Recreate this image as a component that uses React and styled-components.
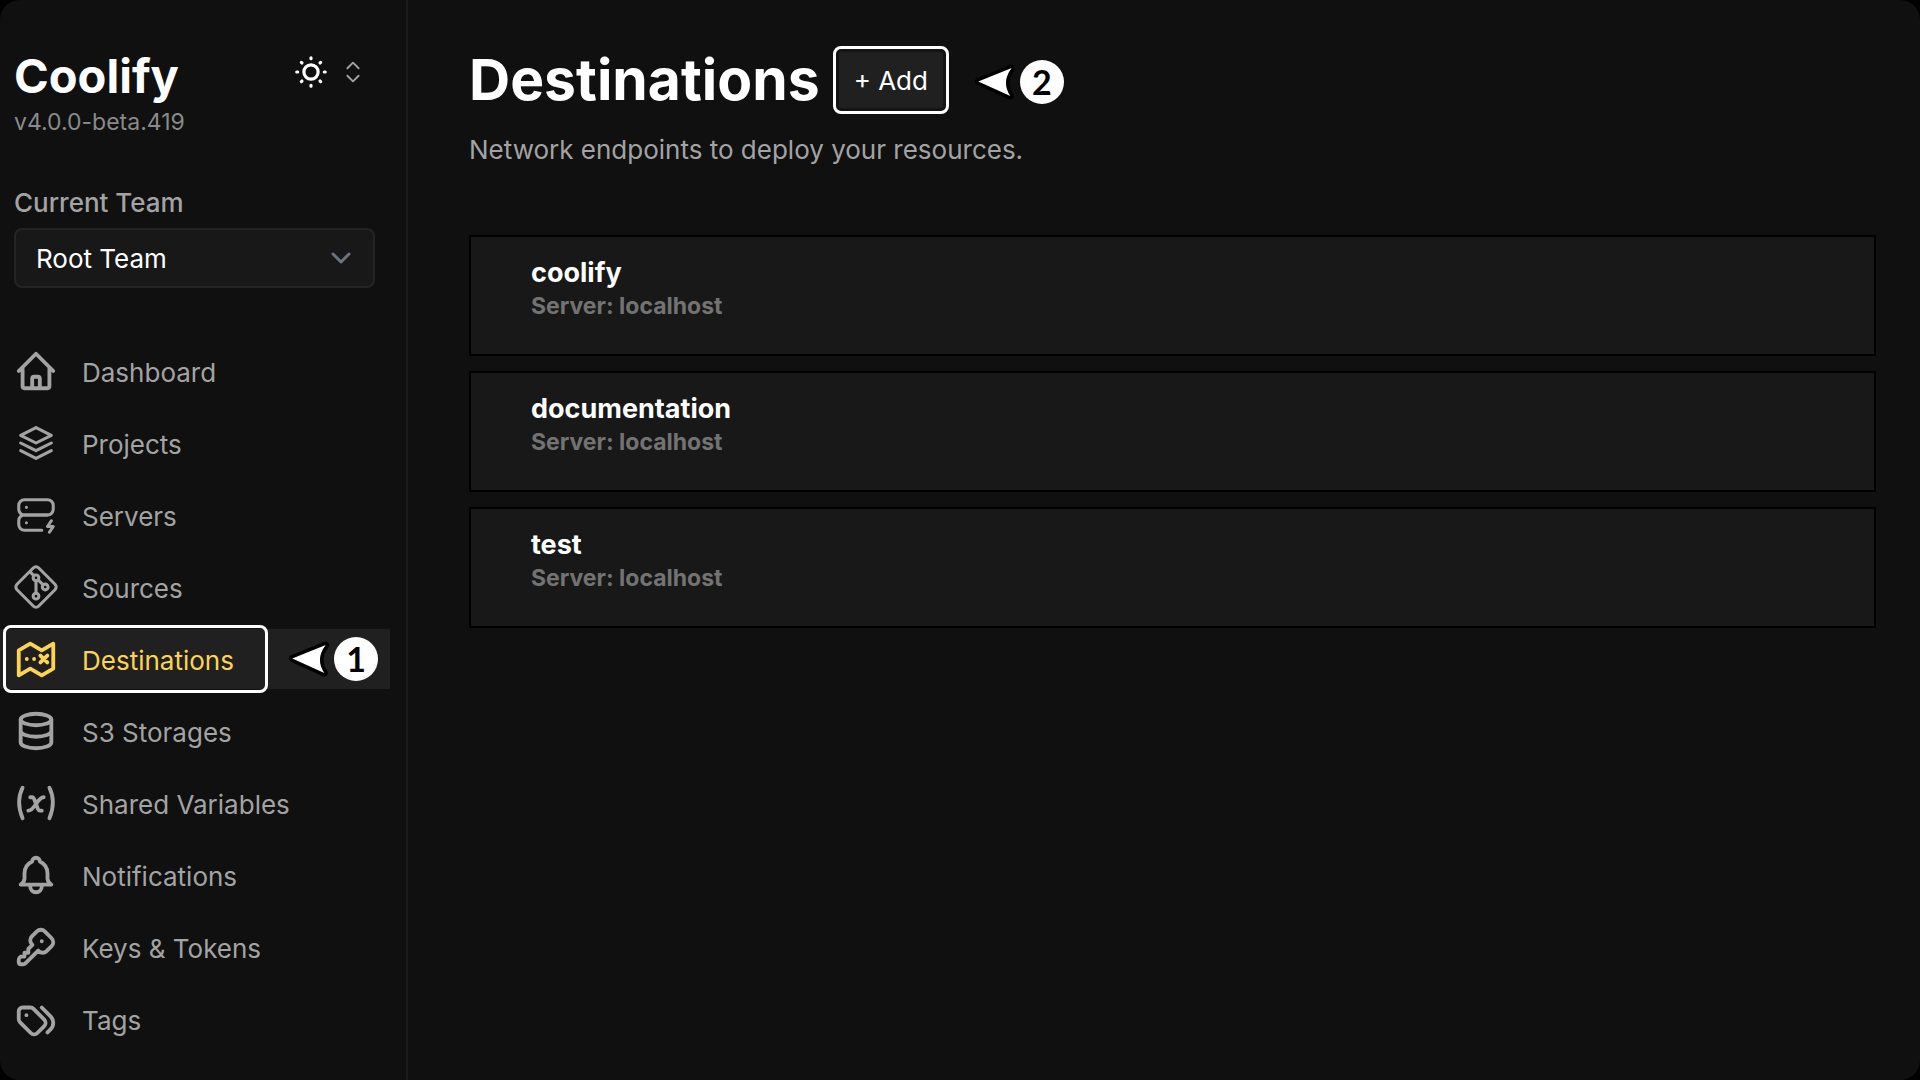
import React from 'react';
import styled, { createGlobalStyle, css } from 'styled-components';

const GlobalStyle = createGlobalStyle`
  *, *::before, *::after { box-sizing: border-box; }
  body {
    margin: 0;
    background: #000;
    color: #a3a3a3;
    font-family: Inter, "Liberation Sans", sans-serif;
    font-size: 26px;
    line-height: 36px;
    -webkit-font-smoothing: antialiased;
  }
  h1, h2, p, ul { margin: 0; padding: 0; }
  ul { list-style: none; }
  a { color: inherit; text-decoration: none; }
  button, select { font: inherit; color: inherit; }
`;

const Shell = styled.div`
  display: grid;
  grid-template-columns: 408px minmax(0, 1fr);
  min-height: 100vh;
  overflow: hidden;
  border-radius: 20px;
  background: #101010;
`;

const Sidebar = styled.aside`
  display: flex;
  flex-direction: column;
  border-right: 2px solid #1b1b1b;
  padding-top: 48px;
`;

const Brand = styled.header`
  display: flex;
  align-items: flex-start;
  justify-content: space-between;
  padding: 0 38px 0 14px;
`;

const Logo = styled.a`
  display: block;
  color: #fff;
  font-size: 47px;
  font-weight: 700;
  line-height: 56px;
`;

const Version = styled.a`
  display: block;
  font-size: 23px;
  line-height: 36px;
  color: #8a8a8a;
`;

const BrandTools = styled.div`
  display: flex;
  align-items: center;
  gap: 8px;
  height: 48px;
`;

const IconButton = styled.button`
  display: flex;
  padding: 0;
  border: 0;
  background: none;
  color: ${({ $muted }) => ($muted ? '#a3a3a3' : '#fff')};
`;

const TeamField = styled.div`
  display: grid;
  gap: 7px;
  padding: 45px 31px 0 14px;
`;

const TeamLabel = styled.label`
  font-weight: 500;
`;

const SelectFrame = styled.div`
  display: grid;
  align-items: center;
  > * { grid-area: 1 / 1; }
  > svg { justify-self: end; margin-right: 20px; pointer-events: none; }
`;

const Select = styled.select`
  appearance: none;
  width: 100%;
  height: 60px;
  padding: 2px 20px 0;
  border: 2px solid #242424;
  border-radius: 8px;
  background: #181818;
  color: #fff;
`;

const NavList = styled.ul`
  display: grid;
  gap: 12px;
  padding: 53px 16px 0 0;
`;

const NavItem = styled.li`
  position: relative;
`;

const NavLink = styled.a`
  display: flex;
  align-items: center;
  gap: 23px;
  height: 60px;
  padding-left: 13px;
  ${({ $active }) => $active && css`
    background: #202020;
    color: #fcd452;
  `}
`;

const NavLabel = styled.span`
  padding-top: 4px;
`;

const highlight = css`
  border: 3px solid #fff;
  border-radius: 8px;
`;

const NavHighlight = styled.span`
  ${highlight}
  position: absolute;
  inset: -4px 122px -4px 3px;
  pointer-events: none;
`;

const NavCallout = styled.span`
  position: absolute;
  inset: 0 12px 0 auto;
  display: flex;
  align-items: center;
`;

const Callout = styled.span`
  display: flex;
  align-items: center;
  gap: 4px;
`;

const Badge = styled.span`
  display: grid;
  place-items: center;
  width: 44px;
  height: 44px;
  border-radius: 50%;
  background: #fff;
  color: #000;
  font-family: Lato, sans-serif;
  font-size: 34px;
  font-weight: 700;
  line-height: 44px;
`;

const Main = styled.main`
  padding: 46px 44px 48px 61px;
`;

const TitleRow = styled.div`
  display: flex;
  align-items: center;
  gap: 13px;
`;

const Title = styled.h1`
  color: #fff;
  font-size: 57px;
  font-weight: 700;
  line-height: 68px;
`;

const AddButton = styled.button`
  ${highlight}
  height: 68px;
  margin-right: 12px;
  padding: 2px 18px 0;
  background: #202020;
  box-shadow: inset 0 0 0 3px #141414;
  color: #fff;
`;

const TitleCallout = styled(Callout)`
  padding-top: 4px;
`;

const Subtitle = styled.p`
  padding: 18px 0 67px;
`;

const Cards = styled.ul`
  display: grid;
  gap: 15px;
`;

const Card = styled.a`
  display: block;
  height: 121px;
  padding: 19px 60px;
  border: 2px solid #000;
  background: #181818;
  font-weight: 700;
`;

const CardTitle = styled.h2`
  color: #fff;
  font-size: 27px;
  line-height: 34px;
`;

const CardMeta = styled.p`
  color: #737373;
  font-size: 23px;
  line-height: 32px;
`;

const Glyph = ({ children, size = 46, stroke = 2 }) => (
  <svg
    width={size}
    height={size}
    viewBox="0 0 24 24"
    fill="none"
    stroke="currentColor"
    strokeWidth={stroke}
    strokeLinecap="round"
    strokeLinejoin="round"
    aria-hidden="true"
  >
    {children}
  </svg>
);

const Pointer = () => (
  <svg width="42" height="36" viewBox="0 0 42 36" aria-hidden="true">
    <path
      d="M4.300 17.500L37.700 4Q27 18 36.300 32Z"
      fill="#fff"
      stroke="#000"
      strokeWidth="7"
      strokeLinejoin="round"
      paintOrder="stroke"
    />
  </svg>
);

const nav = [
  {
    label: 'Dashboard',
    icon: (
      <Glyph>
        <path d="M3 12l9-9l9 9M5 10.500v9.500a1 1 0 0 0 1 1h12a1 1 0 0 0 1-1v-9.500M10 21v-5a1 1 0 0 1 1-1h2a1 1 0 0 1 1 1v5" />
      </Glyph>
    ),
  },
  {
    label: 'Projects',
    icon: (
      <Glyph stroke={1.6}>
        <path d="M12 4l-8 4l8 4l8-4l-8-4M4 12l8 4l8-4M4 16l8 4l8-4" />
      </Glyph>
    ),
  },
  {
    label: 'Servers',
    icon: (
      <Glyph stroke={1.6}>
        <rect x="3" y="4" width="18" height="8" rx="3" />
        <path d="M15 20h-9a3 3 0 0 1-3-3v-2a3 3 0 0 1 3-3h12M7 8v.01M7 16v.01M20 15l-2 3h3l-2 3" />
      </Glyph>
    ),
  },
  {
    label: 'Sources',
    icon: (
      <Glyph stroke={1.6}>
        <circle cx="16.800" cy="12" r="1.500" />
        <circle cx="12" cy="7.200" r="1.500" />
        <circle cx="12" cy="16.800" r="1.500" />
        <path d="M12 15.300v-6.600M15.700 10.900l-2.600-2.600M10.900 6.100l-2-2M13.446 2.100l8.455 8.454a2.045 2.045 0 0 1 0 2.892l-8.455 8.455a2.045 2.045 0 0 1-2.892 0l-8.455-8.455a2.045 2.045 0 0 1 0-2.892l8.455-8.455a2.045 2.045 0 0 1 2.892 0z" />
      </Glyph>
    ),
  },
  {
    label: 'Destinations',
    active: true,
    icon: (
      <Glyph>
        <path d="M3 7.500l6-3.500l6 3.500l6-3.500v13l-6 3.500l-6-3.500l-6 3.500zM7.200 12v.01M11 12v.01M14.300 10.200l3.600 3.600M17.900 10.200l-3.600 3.600" />
      </Glyph>
    ),
  },
  {
    label: 'S3 Storages',
    icon: (
      <Glyph>
        <ellipse cx="12" cy="6" rx="8" ry="3" />
        <path d="M4 6v6a8 3 0 0 0 16 0v-6M4 12v6a8 3 0 0 0 16 0v-6" />
      </Glyph>
    ),
  },
  {
    label: 'Shared Variables',
    icon: (
      <Glyph>
        <path d="M5 4c-2.500 5-2.500 10 0 16m14-16c2.500 5 2.500 10 0 16m-10-11h1c1 0 1 1 2.016 3.527c.984 2.473.984 3.473 1.984 3.473h1M8 16c1.500 0 3-2 4-3.500s2.500-3.500 4-3.500" />
      </Glyph>
    ),
  },
  {
    label: 'Notifications',
    icon: (
      <Glyph>
        <path d="M10 5a2 2 0 1 1 4 0a7 7 0 0 1 4 6v3a4 4 0 0 0 2 3h-16a4 4 0 0 0 2-3v-3a7 7 0 0 1 4-6M9 17v1a3 3 0 0 0 6 0v-1" />
      </Glyph>
    ),
  },
  {
    label: 'Keys & Tokens',
    icon: (
      <Glyph>
        <path d="M16.555 3.843l3.602 3.602a2.877 2.877 0 0 1 0 4.069l-2.643 2.643a2.877 2.877 0 0 1-4.069 0l-.301-.301l-6.558 6.558a2 2 0 0 1-1.239.578l-.175.008h-1.172a1 1 0 0 1-.993-.883l-.007-.117v-1.172a2 2 0 0 1 .467-1.284l.119-.13l.414-.414h2v-2h2v-2l2.144-2.144l-.301-.301a2.877 2.877 0 0 1 0-4.069l2.643-2.643a2.877 2.877 0 0 1 4.069 0zM15 9h.01" />
      </Glyph>
    ),
  },
  {
    label: 'Tags',
    icon: (
      <Glyph>
        <path d="M3 8v4.172a2 2 0 0 0 .586 1.414l5.710 5.710a2.410 2.410 0 0 0 3.408 0l3.592-3.592a2.410 2.410 0 0 0 0-3.408l-5.710-5.710a2 2 0 0 0-1.414-.586h-4.172a2 2 0 0 0-2 2zM18 19l1.592-1.592a4.820 4.820 0 0 0 0-6.816l-4.592-4.592M7 10h-.01" />
      </Glyph>
    ),
  },
];

const destinations = ['coolify', 'documentation', 'test'];

export default function App() {
  return (
    <>
      <GlobalStyle />
      <Shell>
        <Sidebar>
          <Brand>
            <div>
              <Logo href="#home">Coolify</Logo>
              <Version href="#release">v4.0.0-beta.419</Version>
            </div>
            <BrandTools>
              <IconButton type="button" aria-label="Theme">
                <Glyph size={38}>
                  <circle cx="12" cy="12" r="4.500" />
                  <path d="M12 3v.6M12 20.400v.6M3 12h.6M20.400 12h.6M5.900 5.900l.4.400M17.700 17.700l.4.400M18.100 5.900l-.4.400M6.300 17.700l-.4.400" />
                </Glyph>
              </IconButton>
              <IconButton type="button" aria-label="Switch view" $muted>
                <Glyph size={30} stroke={1.5}>
                  <path d="M7.500 9l4.500-4.500l4.500 4.500M16.500 15l-4.500 4.500l-4.500-4.500" />
                </Glyph>
              </IconButton>
            </BrandTools>
          </Brand>
          <TeamField>
            <TeamLabel htmlFor="team">Current Team</TeamLabel>
            <SelectFrame>
              <Select id="team" defaultValue="root">
                <option value="root">Root Team</option>
              </Select>
              <svg width="28" height="28" viewBox="0 0 28 28" fill="none" stroke="#6b7280" strokeWidth="3" strokeLinecap="round" strokeLinejoin="round" aria-hidden="true">
                <path d="M6 10l8 8l8-8" />
              </svg>
            </SelectFrame>
          </TeamField>
          <nav aria-label="Main">
            <NavList>
              {nav.map(({ label, icon, active }) => (
                <NavItem key={label}>
                  <NavLink href={`#${label}`} $active={active} aria-current={active ? 'page' : undefined}>
                    {icon}
                    <NavLabel>{label}</NavLabel>
                  </NavLink>
                  {active && (
                    <>
                      <NavHighlight />
                      <NavCallout>
                        <Callout>
                          <Pointer />
                          <Badge>1</Badge>
                        </Callout>
                      </NavCallout>
                    </>
                  )}
                </NavItem>
              ))}
            </NavList>
          </nav>
        </Sidebar>
        <Main>
          <TitleRow>
            <Title>Destinations</Title>
            <AddButton type="button">+ Add</AddButton>
            <TitleCallout>
              <Pointer />
              <Badge>2</Badge>
            </TitleCallout>
          </TitleRow>
          <Subtitle>Network endpoints to deploy your resources.</Subtitle>
          <Cards>
            {destinations.map((name) => (
              <li key={name}>
                <Card href={`#${name}`}>
                  <CardTitle>{name}</CardTitle>
                  <CardMeta>Server: localhost</CardMeta>
                </Card>
              </li>
            ))}
          </Cards>
        </Main>
      </Shell>
    </>
  );
}
